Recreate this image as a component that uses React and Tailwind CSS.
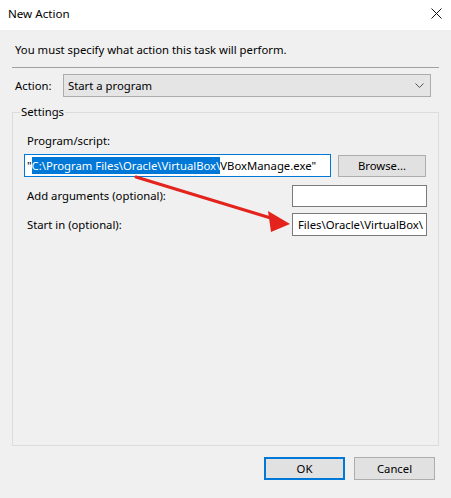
import React from 'react';

const NewActionDialog = () => {
  return (
    <div
      className="relative w-[451px] h-[498px] bg-[#f0f0f0] text-[11.3px] text-black overflow-hidden"
      style={{ fontFamily: '"Noto Sans", "Open Sans", sans-serif' }}
    >
      {/* title bar */}
      <div className="h-[30px] bg-white flex items-center justify-between pl-[8px] pr-[9px]">
        <span className="leading-[16px] -mt-[2px] text-[11.6px]">New Action</span>
        <svg width="11" height="11" viewBox="0 0 11 11" className="-mt-[4px]">
          <path d="M0.5 0.5 L10.5 10.5 M10.5 0.5 L0.5 10.5" stroke="#111" strokeWidth="1" fill="none" />
        </svg>
      </div>

      <div className="px-[12px]">
        <p className="mt-[12px] pl-[3px] leading-[16px]">You must specify what action this task will perform.</p>
        <div className="mt-[9px] h-px bg-[#a0a0a0]" />

        <div className="mt-[6px] flex items-center h-[23px]">
          <span className="w-[51px] pl-[3px] leading-[16px]">Action:</span>
          <div className="flex-1 mr-[8px] h-[23px] bg-[#e5e5e5] border border-[#acacac] flex items-center justify-between pl-[4px] pr-[6px]">
            <span className="leading-[16px]">Start a program</span>
            <svg width="9" height="5" viewBox="0 0 9 5">
              <path d="M0.5 0.5 L4.5 4.5 L8.5 0.5" stroke="#555" strokeWidth="1" fill="none" />
            </svg>
          </div>
        </div>

        <fieldset className="mt-[7px] border border-[#dcdcdc] pb-[209px]">
          <legend className="ml-[7px] px-[1px] leading-[16px]">Settings</legend>

          <div className="mt-[13px] pl-[14px] leading-[16px]">Program/script:</div>
          <div className="mt-[5px] flex items-center">
            <div className="ml-[11px] w-[307px] h-[23px] bg-white border border-[#0078d7] flex items-center pl-[2px] whitespace-nowrap overflow-hidden">
              <span className="leading-[16px]">"</span>
              <span className="leading-[17px] bg-[#0078d7] text-white">C:\Program Files\Oracle\VirtualBox\</span>
              <span className="leading-[16px]">VBoxManage.exe"</span>
            </div>
            <button className="ml-[7px] w-[88px] h-[22px] bg-[#e1e1e1] border border-[#adadad] leading-[16px]">
              Browse...
            </button>
          </div>

          <div className="mt-[8px] flex items-center">
            <span className="pl-[14px] leading-[16px]">Add arguments (optional):</span>
            <div className="ml-auto mr-[11px] w-[135px] h-[22px] bg-white border border-[#7a7a7a]" />
          </div>

          <div className="mt-[6px] flex items-center">
            <span className="pl-[14px] leading-[16px]">Start in (optional):</span>
            <div className="ml-auto mr-[11px] w-[135px] h-[23px] bg-white border border-[#7a7a7a] flex items-center pl-[5px] whitespace-nowrap overflow-hidden">
              <span className="leading-[16px]">Files\Oracle\VirtualBox\</span>
            </div>
          </div>
        </fieldset>

        <div className="mt-[11px] flex justify-end gap-[9px] pr-[4px]">
          <button className="w-[81px] h-[23px] bg-[#e1e1e1] border-2 border-[#0078d7] leading-[16px]">OK</button>
          <button className="w-[81px] h-[23px] bg-[#e1e1e1] border border-[#adadad] leading-[16px]">Cancel</button>
        </div>
      </div>

      {/* red annotation arrow */}
      <svg className="absolute left-0 top-0 pointer-events-none" width="451" height="498">
        <line x1="136" y1="177" x2="274" y2="219" stroke="#e3231c" strokeWidth="3" strokeLinecap="round" />
        <polygon points="290,224 268,211 271,232" fill="#e3231c" />
      </svg>
    </div>
  );
};

export default NewActionDialog;
